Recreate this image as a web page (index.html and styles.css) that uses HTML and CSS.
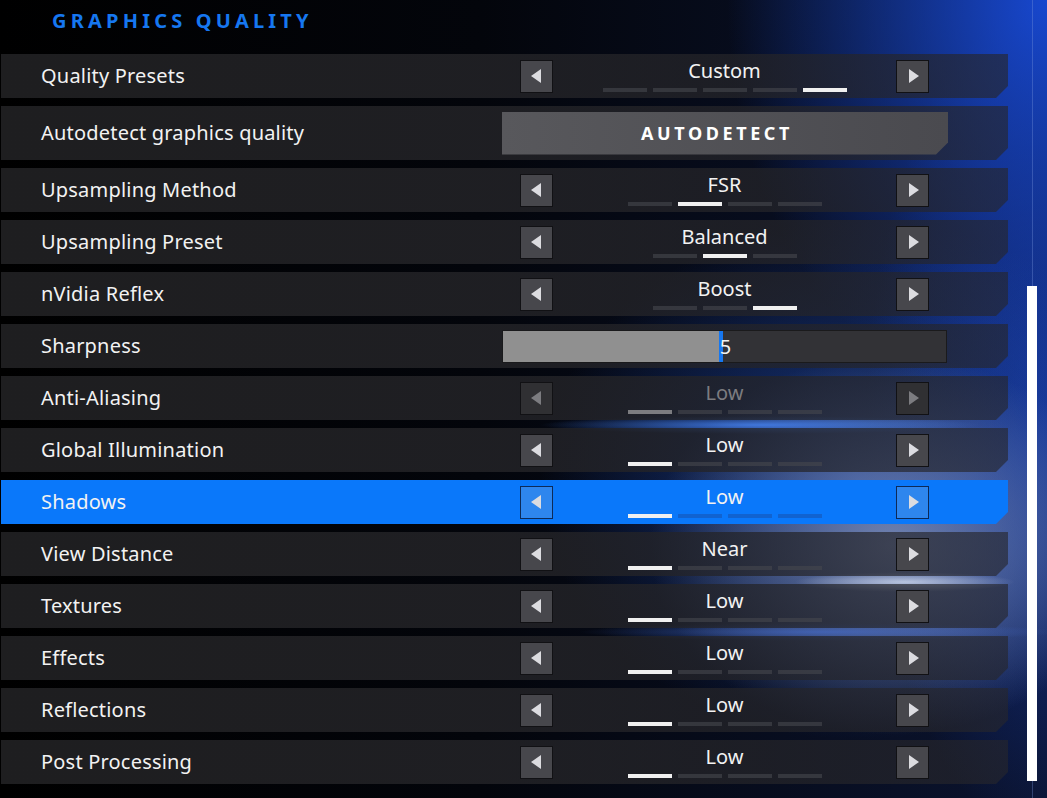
FILE: index.html
```html
<!DOCTYPE html>
<html lang="en">
<head>
    <meta charset="UTF-8">
    <title>Graphics Quality</title>
    <link rel="stylesheet" href="styles.css">
</head>
<body>
    <div class="screen">
        <h1 class="title">GRAPHICS QUALITY</h1>

        <div class="list">
            <div class="row">
                <span class="label">Quality Presets</span>
                <div class="picker">
                    <button class="arrow arrow-left"></button>
                    <div class="value-box">
                        <span class="value">Custom</span>
                        <div class="pips"><i></i><i></i><i></i><i></i><i class="on"></i></div>
                    </div>
                    <button class="arrow arrow-right"></button>
                </div>
            </div>

            <div class="row row-tall">
                <span class="label">Autodetect graphics quality</span>
                <button class="autodetect">AUTODETECT</button>
            </div>

            <div class="row">
                <span class="label">Upsampling Method</span>
                <div class="picker">
                    <button class="arrow arrow-left"></button>
                    <div class="value-box">
                        <span class="value">FSR</span>
                        <div class="pips"><i></i><i class="on"></i><i></i><i></i></div>
                    </div>
                    <button class="arrow arrow-right"></button>
                </div>
            </div>

            <div class="row">
                <span class="label">Upsampling Preset</span>
                <div class="picker">
                    <button class="arrow arrow-left"></button>
                    <div class="value-box">
                        <span class="value">Balanced</span>
                        <div class="pips"><i></i><i class="on"></i><i></i></div>
                    </div>
                    <button class="arrow arrow-right"></button>
                </div>
            </div>

            <div class="row">
                <span class="label">nVidia Reflex</span>
                <div class="picker">
                    <button class="arrow arrow-left"></button>
                    <div class="value-box">
                        <span class="value">Boost</span>
                        <div class="pips"><i></i><i></i><i class="on"></i></div>
                    </div>
                    <button class="arrow arrow-right"></button>
                </div>
            </div>

            <div class="row">
                <span class="label">Sharpness</span>
                <div class="slider">
                    <div class="slider-fill" style="width: 220px"></div>
                    <span class="slider-value">5</span>
                </div>
            </div>

            <div class="row row-disabled">
                <span class="label">Anti-Aliasing</span>
                <div class="picker">
                    <button class="arrow arrow-left"></button>
                    <div class="value-box">
                        <span class="value">Low</span>
                        <div class="pips"><i class="on"></i><i></i><i></i><i></i></div>
                    </div>
                    <button class="arrow arrow-right"></button>
                </div>
            </div>

            <div class="row">
                <span class="label">Global Illumination</span>
                <div class="picker">
                    <button class="arrow arrow-left"></button>
                    <div class="value-box">
                        <span class="value">Low</span>
                        <div class="pips"><i class="on"></i><i></i><i></i><i></i></div>
                    </div>
                    <button class="arrow arrow-right"></button>
                </div>
            </div>

            <div class="row row-active">
                <span class="label">Shadows</span>
                <div class="picker">
                    <button class="arrow arrow-left"></button>
                    <div class="value-box">
                        <span class="value">Low</span>
                        <div class="pips"><i class="on"></i><i></i><i></i><i></i></div>
                    </div>
                    <button class="arrow arrow-right"></button>
                </div>
            </div>

            <div class="row">
                <span class="label">View Distance</span>
                <div class="picker">
                    <button class="arrow arrow-left"></button>
                    <div class="value-box">
                        <span class="value">Near</span>
                        <div class="pips"><i class="on"></i><i></i><i></i><i></i></div>
                    </div>
                    <button class="arrow arrow-right"></button>
                </div>
            </div>

            <div class="row">
                <span class="label">Textures</span>
                <div class="picker">
                    <button class="arrow arrow-left"></button>
                    <div class="value-box">
                        <span class="value">Low</span>
                        <div class="pips"><i class="on"></i><i></i><i></i><i></i></div>
                    </div>
                    <button class="arrow arrow-right"></button>
                </div>
            </div>

            <div class="row">
                <span class="label">Effects</span>
                <div class="picker">
                    <button class="arrow arrow-left"></button>
                    <div class="value-box">
                        <span class="value">Low</span>
                        <div class="pips"><i class="on"></i><i></i><i></i><i></i></div>
                    </div>
                    <button class="arrow arrow-right"></button>
                </div>
            </div>

            <div class="row">
                <span class="label">Reflections</span>
                <div class="picker">
                    <button class="arrow arrow-left"></button>
                    <div class="value-box">
                        <span class="value">Low</span>
                        <div class="pips"><i class="on"></i><i></i><i></i><i></i></div>
                    </div>
                    <button class="arrow arrow-right"></button>
                </div>
            </div>

            <div class="row">
                <span class="label">Post Processing</span>
                <div class="picker">
                    <button class="arrow arrow-left"></button>
                    <div class="value-box">
                        <span class="value">Low</span>
                        <div class="pips"><i class="on"></i><i></i><i></i><i></i></div>
                    </div>
                    <button class="arrow arrow-right"></button>
                </div>
            </div>
        </div>

        <div class="scrollbar"><div class="thumb"></div></div>
    </div>
</body>
</html>
```

FILE: styles.css
```css
* {
    box-sizing: border-box;
}

html, body {
    margin: 0;
    height: 100%;
}

body {
    font-family: "Noto Sans", "Open Sans", sans-serif;
    color: #f2f2f2;
    background-color: #04060c;
    overflow: hidden;
}

/* Backdrop with the blue glows */
.screen {
    position: relative;
    width: 1047px;
    height: 798px;
    background:
        radial-gradient(ellipse 110px 10px at 905px 582px, rgba(215, 225, 245, 0.75), transparent),
        radial-gradient(ellipse 220px 9px at 760px 425px, rgba(70, 130, 240, 0.85), transparent),
        radial-gradient(ellipse 240px 9px at 820px 632px, rgba(70, 110, 210, 0.65), transparent),
        radial-gradient(ellipse 240px 190px at 890px 545px, rgba(135, 150, 190, 0.8), transparent),
        radial-gradient(ellipse 320px 260px at 860px 480px, rgba(35, 85, 200, 0.6), transparent),
        radial-gradient(ellipse 320px 420px at 1047px 0px, rgba(24, 74, 215, 0.95), transparent),
        radial-gradient(ellipse 180px 420px at 1047px 420px, rgba(25, 65, 190, 0.65), transparent),
        linear-gradient(90deg, #000 0, #03050b 480px, #0b1430 1047px);
}

.title {
    margin: 0;
    height: 54px;
    padding: 8px 0 0 52px;
    font-size: 20px;
    line-height: 26px;
    font-weight: 700;
    letter-spacing: 4.2px;
    color: #1677f0;
}

.list {
    display: flex;
    flex-direction: column;
    gap: 8px;
    width: 1007px;
    margin-left: 1px;
}

.row {
    display: flex;
    align-items: center;
    height: 44px;
    background: linear-gradient(90deg, rgba(31, 31, 33, 0.97) 0, rgba(34, 34, 38, 0.88) 480px, rgba(38, 38, 44, 0.64) 1007px);
    clip-path: polygon(0 0, 100% 0, 100% calc(100% - 12px), calc(100% - 12px) 100%, 0 100%);
}

.row-tall {
    height: 54px;
}

.label {
    width: 519px;
    padding: 0 0 2px 40px;
    font-size: 20px;
    letter-spacing: 0.2px;
}

.picker {
    display: flex;
    align-items: center;
    height: 100%;
}

.arrow {
    width: 33px;
    height: 33px;
    padding: 0;
    border: 1px solid #111114;
    background: #47474c;
    display: flex;
    align-items: center;
    justify-content: center;
}

.arrow::before {
    content: "";
    border-top: 7px solid transparent;
    border-bottom: 7px solid transparent;
}

.arrow-left::before {
    border-right: 10px solid #dcdce0;
    margin-right: 2px;
}

.arrow-right::before {
    border-left: 10px solid #dcdce0;
    margin-left: 2px;
}

.value-box {
    width: 343px;
    height: 100%;
    display: flex;
    flex-direction: column;
    align-items: center;
    padding-top: 5px;
}

.value {
    font-size: 20px;
    line-height: 24px;
}

.pips {
    display: flex;
    gap: 6px;
    margin-top: 5px;
}

.pips i {
    width: 44px;
    height: 4px;
    background: rgba(70, 72, 78, 0.6);
}

.pips i.on {
    background: #f0f0f0;
}

.autodetect {
    width: 446px;
    height: 43px;
    margin-left: -18px;
    border: none;
    background: linear-gradient(90deg, #58585c, #4a4a4f);
    clip-path: polygon(0 0, 100% 0, 100% calc(100% - 12px), calc(100% - 12px) 100%, 0 100%);
    font-family: "Noto Sans", sans-serif;
    font-size: 18px;
    font-weight: 700;
    letter-spacing: 3.6px;
    color: #fff;
    padding: 0 16px 0 0;
}

.slider {
    position: relative;
    width: 445px;
    height: 33px;
    margin-left: -18px;
    background: #323236;
    border: 1px solid #1a1a1c;
    display: flex;
    align-items: center;
    justify-content: center;
}

.slider-fill {
    position: absolute;
    left: 0;
    top: 0;
    bottom: 0;
    background: #909090;
    border-right: 4px solid #1677f0;
}

.slider-value {
    position: relative;
    font-size: 20px;
    padding-left: 2px;
}

/* Disabled option */
.row-disabled .value {
    color: #7c7c80;
}

.row-disabled .arrow {
    background: #303033;
}

.row-disabled .arrow-left::before {
    border-right-color: #7c7c80;
}

.row-disabled .arrow-right::before {
    border-left-color: #7c7c80;
}

.row-disabled .pips i.on {
    background: #7c7c80;
}

/* Selected option */
.row-active {
    background: #0a78fa;
}

.row-active .arrow {
    background: #2e86ee;
    border-color: #0c2a58;
}

.row-active .pips i {
    background: rgba(20, 90, 190, 0.7);
}

.row-active .pips i.on {
    background: #f0f0f0;
}

.scrollbar {
    position: absolute;
    top: 0;
    left: 1027px;
    width: 10px;
    height: 798px;
}

.scrollbar::before {
    content: "";
    position: absolute;
    left: 5px;
    top: 0;
    bottom: 0;
    width: 1px;
    background: rgba(120, 150, 220, 0.35);
}

.thumb {
    position: absolute;
    top: 286px;
    left: 0;
    width: 10px;
    height: 495px;
    background: #fff;
}
```
